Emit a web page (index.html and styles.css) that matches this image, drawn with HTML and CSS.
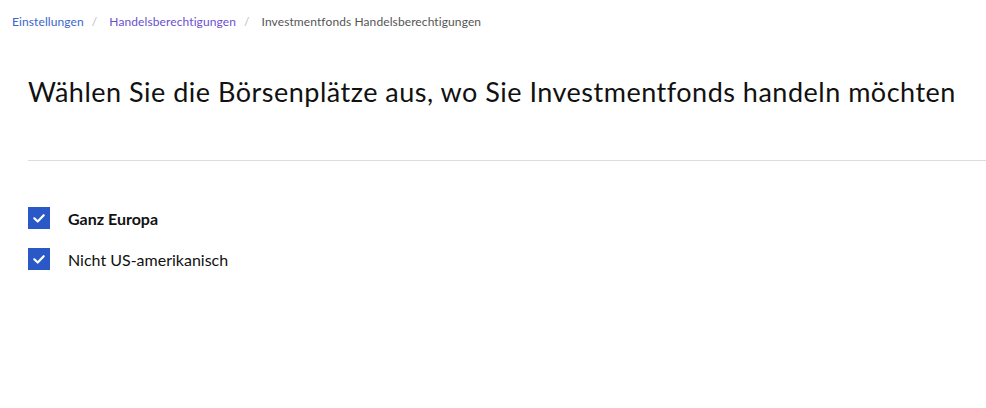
FILE: index.html
```html
<!DOCTYPE html>
<html lang="de">
<head>
<meta charset="utf-8">
<link rel="stylesheet" href="styles.css">
</head>
<body>
<nav class="crumbs">
  <a class="crumb link" href="#">Einstellungen</a><span class="sep">/</span>
  <a class="crumb visited" href="#">Handelsberechtigungen</a><span class="sep">/</span>
  <span class="crumb current">Investmentfonds Handelsberechtigungen</span>
</nav>
<main class="content">
  <h1 class="title">Wählen Sie die Börsenplätze aus, wo Sie Investmentfonds handeln möchten</h1>
  <hr class="divider">
  <ul class="options">
    <li class="option"><span class="box"><svg viewBox="0 0 22 22" width="22" height="22"><path d="M6.3 11.3l3.4 3.2 6-6.3" fill="none" stroke="#fff" stroke-width="2.2" stroke-linecap="round" stroke-linejoin="round"/></svg></span><span class="label bold">Ganz Europa</span></li>
    <li class="option"><span class="box"><svg viewBox="0 0 22 22" width="22" height="22"><path d="M6.3 11.3l3.4 3.2 6-6.3" fill="none" stroke="#fff" stroke-width="2.2" stroke-linecap="round" stroke-linejoin="round"/></svg></span><span class="label">Nicht US-amerikanisch</span></li>
  </ul>
</main>
</body>
</html>
```
FILE: styles.css
```css
* { box-sizing: border-box; }
html, body { margin: 0; padding: 0; background: #fff; }
body { font-family: Lato, "Open Sans", sans-serif; color: #111; }
.crumbs {
  display: flex;
  align-items: center;
  padding: 14px 0 0 12px;
  font-size: 12px;
  line-height: 16px;
  letter-spacing: 0.1px;
}
.crumb { text-decoration: none; }
.link { color: #3a66cc; }
.visited { color: #6a4fd0; }
.current { color: #555; }
.sep { color: #bbb; margin: 0 12px 0 8px; }
.content { padding: 0 0 0 28px; }
.title {
  margin: 0;
  padding-top: 45px;
  font-size: 27px;
  font-weight: 400;
  line-height: 34px;
  letter-spacing: 0.5px;
  color: #111;
}
.divider {
  margin: 51px 0 0 0;
  border: 0;
  border-top: 1px solid #ddd;
  height: 0;
}
.options { list-style: none; margin: 0; padding: 46px 0 0 0; display: flex; flex-direction: column; gap: 19px; }
.option { display: flex; align-items: center; gap: 18px; height: 22px; }
.box { width: 22px; height: 22px; background: #2a58c6; display: block; flex: none; }
.box svg { display: block; }
.label { font-size: 16px; color: #111; }
.bold { font-weight: 700; }
```
